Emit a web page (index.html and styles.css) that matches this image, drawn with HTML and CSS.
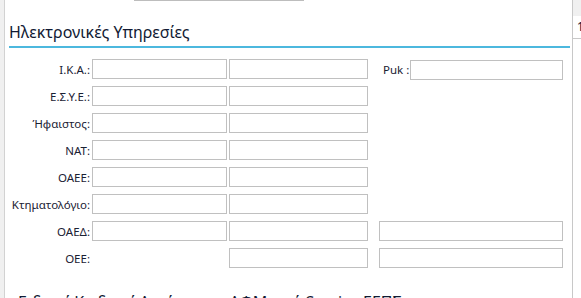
FILE: index.html
```html
<!DOCTYPE html>
<html lang="el">
  <head>
    <meta charset="UTF-8" />
    <meta name="viewport" content="width=device-width, initial-scale=1.0" />
    <title>Ηλεκτρονικές Υπηρεσίες</title>
    <link rel="stylesheet" href="styles.css">
  </head>
  <body>
    <div class="page">
      <div class="side-left"></div>

      <main class="content">
        <div class="top-edge"></div>
        <h2 class="section-title">Ηλεκτρονικές Υπηρεσίες</h2>

        <div class="services-form">
          <label class="lbl">Ι.Κ.Α.:</label>
          <input type="text" />
          <input type="text" />
          <div class="extra puk">
            <span class="lbl">Puk :</span>
            <input type="text" />
          </div>

          <label class="lbl">Ε.Σ.Υ.Ε.:</label>
          <input type="text" />
          <input type="text" />
          <div class="extra"></div>

          <label class="lbl">Ήφαιστος:</label>
          <input type="text" />
          <input type="text" />
          <div class="extra"></div>

          <label class="lbl">ΝΑΤ:</label>
          <input type="text" />
          <input type="text" />
          <div class="extra"></div>

          <label class="lbl">ΟΑΕΕ:</label>
          <input type="text" />
          <input type="text" />
          <div class="extra"></div>

          <label class="lbl">Κτηματολόγιο:</label>
          <input type="text" />
          <input type="text" />
          <div class="extra"></div>

          <label class="lbl">ΟΑΕΔ:</label>
          <input type="text" />
          <input type="text" />
          <div class="extra"><input type="text" /></div>

          <label class="lbl">ΟΕΕ:</label>
          <div></div>
          <input type="text" />
          <div class="extra"><input type="text" /></div>
        </div>

        <h2 class="section-title plain">Ειδικοί Κωδικοί Ανοίγματος ΑΦΜ από Service ΕΕΠΣ</h2>
      </main>

      <aside class="side-grid">
        <div class="grid-head"></div>
        <div class="grid-cell">1</div>
      </aside>
    </div>
  </body>
</html>
```

FILE: styles.css
```css
* {
  margin: 0;
  padding: 0;
  box-sizing: border-box;
}
html,
body {
  height: 100%;
  overflow: hidden;
}
body {
  font-family: "Noto Sans", "Open Sans", sans-serif;
  background-color: #fff;
  color: #1f2638;
}
.page {
  display: flex;
  height: 298px;
}
.side-left {
  width: 5px;
  flex: none;
  background-color: #f0f0f0;
  border-right: 1px solid #d2d2d2;
}
.content {
  flex: 1;
  padding: 0 2px 0 4px;
  overflow: hidden;
}
.top-edge {
  margin-left: 125px;
  width: 170px;
  border-top: 1px solid #bdbdbd;
}
.section-title {
  font-size: 16px;
  font-weight: normal;
  line-height: 22px;
  color: #111a33;
  margin-top: 20px;
  padding-bottom: 3px;
  border-bottom: 2px solid #4cb8de;
  white-space: nowrap;
}
.section-title.plain {
  border-bottom: none;
  margin-top: 23px;
  padding-left: 9px;
}
.services-form {
  display: grid;
  grid-template-columns: 81px 135px 139px 195px;
  grid-auto-rows: 20px;
  column-gap: 2px;
  row-gap: 7px;
  margin-top: 11px;
}
.lbl {
  align-self: center;
  text-align: right;
  font-size: 11.5px;
  color: #1a2133;
  white-space: nowrap;
}
input {
  height: 20px;
  border: 1px solid #c0c0c0;
  background-color: #fff;
  font-size: 12px;
  outline: none;
}
.extra {
  display: flex;
  align-items: center;
  margin-left: 9px;
  width: 184px;
}
.extra input {
  width: 100%;
}
.extra.puk {
  margin-top: 1px;
}
.extra.puk .lbl {
  margin-left: 4px;
}
.extra.puk input {
  width: 153px;
  margin-left: auto;
}
.side-grid {
  width: 9px;
  flex: none;
  border-left: 1px solid #c8c8c8;
  background-color: #fff;
}
.grid-head {
  height: 16px;
  background-color: #f0f0f0;
}
.grid-cell {
  height: 23px;
  padding: 4px 0 0 4px;
  font-size: 12px;
  line-height: 14px;
  color: #1a1030;
  border-bottom: 1px solid #c8c8c8;
  overflow: hidden;
}
```
